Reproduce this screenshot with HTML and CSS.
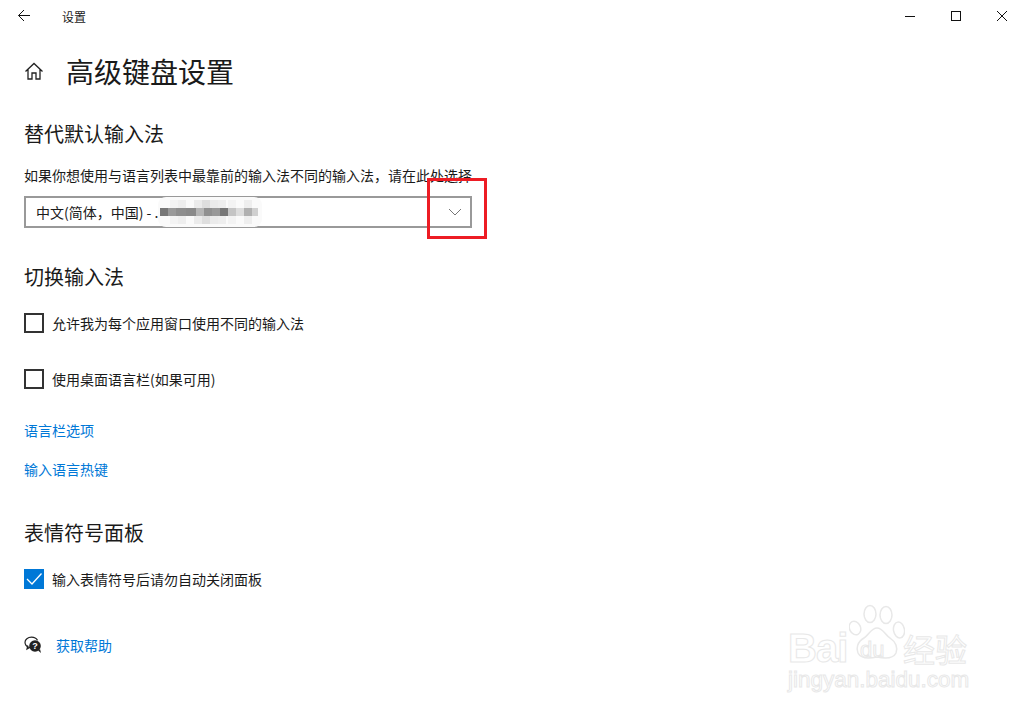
FILE: index.html
```html
<!DOCTYPE html>
<html lang="zh-CN">
<head>
    <meta charset="UTF-8">
    <title>设置</title>
    <link rel="stylesheet" href="styles.css">
</head>
<body>
    <div class="titlebar">
        <svg class="back-icon" width="16" height="16" viewBox="0 0 16 16"><path d="M14 7.500H2.500M8 2L2.500 7.500 8 13" fill="none" stroke="#111" stroke-width="1"/></svg>
        <span class="app-name">设置</span>
        <div class="window-btns">
            <svg width="46" height="32" viewBox="0 0 46 32"><path d="M18 16.500h10" stroke="#111" fill="none"/></svg>
            <svg width="46" height="32" viewBox="0 0 46 32"><rect x="18.500" y="11.500" width="9" height="9" stroke="#111" fill="none"/></svg>
            <svg width="46" height="32" viewBox="0 0 46 32"><path d="M18 11l10 10M28 11L18 21" stroke="#111" fill="none"/></svg>
        </div>
    </div>

    <div class="content">
        <div class="page-head">
            <svg width="20" height="20" viewBox="0 0 20 20"><path d="M1.500 10.500L10 2.500l8.500 8M4 8.500V18h4v-6h4v6h4V8.500" fill="none" stroke="#222" stroke-width="1.300"/></svg>
            <h1>高级键盘设置</h1>
        </div>

        <h2 class="first">替代默认输入法</h2>
        <p class="field-label">如果你想使用与语言列表中最靠前的输入法不同的输入法，请在此处选择</p>
        <div class="select">
            <span>中文(简体，中国) - .</span>
            <svg class="chevron" width="14" height="8" viewBox="0 0 14 8"><path d="M1 1l6 6 6-6" fill="none" stroke="#777"/></svg>
            <svg class="mosaic" width="104" height="30" viewBox="0 0 104 30">
                <rect x="0" y="0" width="104" height="30" rx="8" fill="#fafafa"/>
                <rect x="12" y="3" width="8" height="24" fill="#f3f3f3"/>
                <rect x="20" y="3" width="8" height="24" fill="#eeeeee"/>
                <rect x="36" y="3" width="8" height="24" fill="#ebebeb"/>
                <rect x="44" y="3" width="8" height="24" fill="#dedede"/>
                <rect x="52" y="3" width="8" height="24" fill="#ebebeb"/>
                <rect x="60" y="3" width="8" height="24" fill="#eeeeee"/>
                <rect x="70" y="3" width="8" height="24" fill="#f3f3f3"/>
                <rect x="86" y="3" width="8" height="24" fill="#eeeeee"/>
                <rect x="2" y="11" width="8" height="8" fill="#777"/>
                <rect x="10" y="11" width="8" height="8" fill="#999"/>
                <rect x="18" y="11" width="10" height="8" fill="#8e8e8e"/>
                <rect x="28" y="11" width="10" height="8" fill="#8a8a8a"/>
                <rect x="38" y="11" width="8" height="8" fill="#b5b5b5"/>
                <rect x="46" y="11" width="8" height="8" fill="#909090"/>
                <rect x="54" y="11" width="8" height="8" fill="#999"/>
                <rect x="62" y="11" width="8" height="8" fill="#777"/>
                <rect x="70" y="11" width="8" height="8" fill="#c4c4c4"/>
                <rect x="78" y="11" width="8" height="8" fill="#dcdcdc"/>
                <rect x="86" y="11" width="8" height="8" fill="#b0b0b0"/>
                <rect x="94" y="11" width="6" height="8" fill="#d0d0d0"/>
            </svg>
        </div>

        <h2 class="second">切换输入法</h2>
        <label class="check-row row-a"><span class="box"></span>允许我为每个应用窗口使用不同的输入法</label>
        <label class="check-row row-b"><span class="box"></span>使用桌面语言栏(如果可用)</label>
        <a class="link link-a">语言栏选项</a>
        <a class="link link-b">输入语言热键</a>

        <h2 class="third">表情符号面板</h2>
        <label class="check-row row-c">
            <span class="box checked"><svg width="20" height="20" viewBox="0 0 20 20"><path d="M3 10l5 5 9.500-10.500" fill="none" stroke="#fff" stroke-width="1.300"/></svg></span>
            输入表情符号后请勿自动关闭面板
        </label>

        <div class="help">
            <svg width="18" height="18" viewBox="0 0 18 18">
                <path d="M5 11.500C2.500 10.500 1 8.500 1 6.300 1 3.500 3.800 1.200 7.500 1.200c2.800 0 5 1.300 6 3.200" fill="none" stroke="#222" stroke-width="1.200"/>
                <path d="M3.800 9.500L3 13l3.500-2" fill="none" stroke="#222" stroke-width="1.200"/>
                <circle cx="11" cy="10" r="5.800" fill="#222"/>
                <path d="M14 14.500l3 2.500-1-4z" fill="#222"/>
                <text x="11" y="13" class="help-mark">?</text>
            </svg>
            <a class="link">获取帮助</a>
        </div>
    </div>

    <div class="red-mark"></div>

    <div class="watermark">
        <svg class="paw" width="56" height="64" viewBox="0 0 56 64">
            <g fill="#fff" stroke="#e8e8e8" stroke-width="1.500">
                <ellipse cx="6" cy="24" rx="5.500" ry="7" transform="rotate(-25 6 24)"/>
                <ellipse cx="21" cy="10" rx="6" ry="8.500"/>
                <ellipse cx="37" cy="11" rx="6" ry="8.500"/>
                <ellipse cx="50" cy="26" rx="5.500" ry="8" transform="rotate(-10 50 26)"/>
                <path d="M28 24c-6 0-8 7-13 10-7 4-8 11-6 15 3 6 10 6 19 4 9 2 16 2 19-4 2-5 0-11-6-15-5-3-7-10-13-10z"/>
            </g>
        </svg>
        <span class="wm-bai">Bai</span>
        <span class="wm-du">du</span>
        <span class="wm-cn">经验</span>
        <span class="wm-url">jingyan.baidu.com</span>
    </div>
</body>
</html>
```

FILE: styles.css
```css
* {
    box-sizing: border-box;
}
html, body {
    height: 100%;
}
body {
    margin: 0;
    background-color: #fff;
    color: #1a1a1a;
    font-family: "Noto Sans CJK SC", "Liberation Sans", sans-serif;
    font-size: 14px;
    overflow: hidden;
}
.titlebar {
    display: flex;
    align-items: center;
    height: 32px;
    padding-left: 16px;
}
.back-icon {
    margin-right: 30px;
}
.app-name {
    font-size: 12px;
}
.window-btns {
    display: flex;
    margin-left: auto;
}
.window-btns svg {
    display: block;
}
.content {
    padding: 0 24px;
}
.page-head {
    display: flex;
    align-items: center;
    height: 40px;
    margin-top: 19px;
}
.page-head svg {
    margin-right: 22px;
}
h1 {
    margin: 0;
    font-size: 28px;
    font-weight: 400;
    line-height: 40px;
}
h2 {
    margin: 0;
    font-size: 20px;
    font-weight: 400;
    line-height: 28px;
}
h2.first {
    margin-top: 29px;
}
h2.second {
    margin-top: 35px;
}
h2.third {
    margin-top: 40px;
}
.field-label {
    margin: 17px 0 0;
    line-height: 20px;
    height: 20px;
}
.select {
    position: relative;
    display: flex;
    align-items: center;
    justify-content: space-between;
    width: 448px;
    height: 32px;
    margin-top: 11px;
    padding: 0 8px 0 10px;
    border: 2px solid #999;
}
.mosaic {
    position: absolute;
    left: 132px;
    top: -1px;
}
.check-row {
    display: flex;
    align-items: center;
    height: 20px;
    line-height: 20px;
}
.row-a {
    margin-top: 22px;
}
.row-b {
    margin-top: 36px;
}
.row-c {
    margin-top: 22px;
}
.box {
    flex: none;
    width: 20px;
    height: 20px;
    margin-right: 8px;
    border: 2px solid #333;
}
.box.checked {
    border: 0;
    background-color: #0078d7;
}
.box svg {
    display: block;
}
.link {
    display: block;
    color: #0078d7;
    line-height: 20px;
}
.link-a {
    margin-top: 31px;
}
.link-b {
    margin-top: 19px;
}
.help {
    display: flex;
    align-items: center;
    margin-top: 46px;
    height: 20px;
}
.help svg {
    margin-right: 14px;
}
.help-mark {
    fill: #fff;
    font-size: 9px;
    font-weight: bold;
    text-anchor: middle;
    font-family: "Liberation Sans", sans-serif;
}
.red-mark {
    position: absolute;
    left: 427px;
    top: 178px;
    width: 60px;
    height: 61px;
    border: 3px solid #ed1c24;
}
.watermark {
    position: absolute;
    left: 785px;
    top: 604px;
    width: 190px;
    height: 90px;
    color: #fff;
    -webkit-text-stroke: 1px #e8e8e8;
}
.paw {
    position: absolute;
    left: 64px;
    top: 0;
}
.watermark span {
    position: absolute;
    white-space: nowrap;
}
.wm-bai {
    left: 3px;
    top: 22px;
    font-size: 40px;
    font-weight: bold;
    letter-spacing: -1px;
    line-height: 44px;
    font-family: "Liberation Sans", sans-serif;
}
.wm-du {
    left: 75px;
    top: 33px;
    font-size: 22px;
    line-height: 26px;
    font-family: "Liberation Sans", sans-serif;
}
.wm-cn {
    left: 118px;
    top: 27px;
    font-size: 32px;
    line-height: 34px;
}
.wm-url {
    left: 3px;
    top: 65px;
    font-size: 22.5px;
    line-height: 22px;
    font-family: "Liberation Sans", sans-serif;
}
```
